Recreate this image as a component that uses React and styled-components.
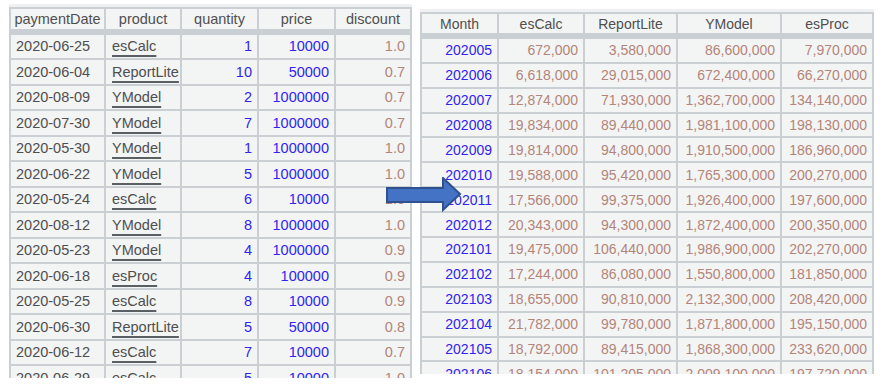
import React from 'react';
import styled, { createGlobalStyle } from 'styled-components';

const GlobalStyle = createGlobalStyle`
	html, body {
		margin: 0;
		padding: 0;
		background: #ffffff;
	}
	body {
		font-family: "Liberation Sans", Arial, sans-serif;
	}
	*, *::before, *::after {
		box-sizing: border-box;
	}
`;

const Page = styled.div`
	position: relative;
	width: 885px;
	height: 388px;
	display: flex;
	align-items: flex-start;
	overflow: hidden;
`;

const Panel = styled.div`
	margin-top: ${p => p.top}px;
	margin-left: ${p => p.left}px;
	height: ${p => p.height}px;
	overflow: hidden;
	border-top: 3px solid #eef0f1;
`;

const Grid = styled.div`
	display: grid;
	grid-template-columns: ${p => p.cols};
	grid-auto-rows: ${p => p.rowHeight}px;
	gap: 2px;
	padding: 2px;
	background: #c9cfd3;
	font-size: ${p => p.fontSize}px;
`;

const HeadCell = styled.div`
	background: #f3f4f4;
	color: #4f4f4f;
	display: flex;
	align-items: center;
	justify-content: center;
	height: ${p => p.height}px;
	white-space: nowrap;
	overflow: hidden;
`;

const Cell = styled.div`
	background: #f3f4f4;
	display: flex;
	align-items: center;
	justify-content: ${p => (p.align === 'left' ? 'flex-start' : 'flex-end')};
	padding: 0 5px;
	white-space: nowrap;
	overflow: hidden;
	color: ${p =>
		p.tone === 'blue' ? '#3124f0' : p.tone === 'brown' ? '#b3857a' : '#4f4f4f'};
`;

const LinkText = styled.span`
	text-decoration: underline;
	text-decoration-color: #5a5f63;
	text-decoration-thickness: 2px;
	text-underline-offset: 4px;
	padding-left: 1px;
`;

const Arrow = styled.svg`
	position: absolute;
	left: 386px;
	top: 177px;
`;

const orders = [
	['2020-06-25', 'esCalc', 1, 10000, '1.0'],
	['2020-06-04', 'ReportLite', 10, 50000, '0.7'],
	['2020-08-09', 'YModel', 2, 1000000, '0.7'],
	['2020-07-30', 'YModel', 7, 1000000, '0.7'],
	['2020-05-30', 'YModel', 1, 1000000, '1.0'],
	['2020-06-22', 'YModel', 5, 1000000, '1.0'],
	['2020-05-24', 'esCalc', 6, 10000, '1.0'],
	['2020-08-12', 'YModel', 8, 1000000, '1.0'],
	['2020-05-23', 'YModel', 4, 1000000, '0.9'],
	['2020-06-18', 'esProc', 4, 100000, '0.9'],
	['2020-05-25', 'esCalc', 8, 10000, '0.9'],
	['2020-06-30', 'ReportLite', 5, 50000, '0.8'],
	['2020-06-12', 'esCalc', 7, 10000, '0.7'],
	['2020-06-29', 'esCalc', 5, 10000, '1.0']
];

const months = [
	['202005', '672,000', '3,580,000', '86,600,000', '7,970,000'],
	['202006', '6,618,000', '29,015,000', '672,400,000', '66,270,000'],
	['202007', '12,874,000', '71,930,000', '1,362,700,000', '134,140,000'],
	['202008', '19,834,000', '89,440,000', '1,981,100,000', '198,130,000'],
	['202009', '19,814,000', '94,800,000', '1,910,500,000', '186,960,000'],
	['202010', '19,588,000', '95,420,000', '1,765,300,000', '200,270,000'],
	['202011', '17,566,000', '99,375,000', '1,926,400,000', '197,600,000'],
	['202012', '20,343,000', '94,300,000', '1,872,400,000', '200,350,000'],
	['202101', '19,475,000', '106,440,000', '1,986,900,000', '202,270,000'],
	['202102', '17,244,000', '86,080,000', '1,550,800,000', '181,850,000'],
	['202103', '18,655,000', '90,810,000', '2,132,300,000', '208,420,000'],
	['202104', '21,782,000', '99,780,000', '1,871,800,000', '195,150,000'],
	['202105', '18,792,000', '89,415,000', '1,868,300,000', '233,620,000'],
	['202106', '18,154,000', '101,205,000', '2,009,100,000', '197,720,000']
];

const OrdersTable = () => (
	<Panel top={4} left={9} height={374}>
		<Grid cols="93px 74px 75px 75px 74px" rowHeight={23.5} fontSize={14.5}>
			{['paymentDate', 'product', 'quantity', 'price', 'discount'].map(h => (
				<HeadCell key={h} height={20}>{h}</HeadCell>
			))}
			{orders.map(row => (
				<React.Fragment key={row[0]}>
					<Cell align="left">{row[0]}</Cell>
					<Cell align="left"><LinkText>{row[1]}</LinkText></Cell>
					<Cell tone="blue">{row[2]}</Cell>
					<Cell tone="blue">{row[3]}</Cell>
					<Cell tone="brown">{row[4]}</Cell>
				</React.Fragment>
			))}
		</Grid>
	</Panel>
);

const SummaryTable = () => (
	<Panel top={9} left={8} height={365}>
		<Grid cols="75px 84px 91px 102px 90px" rowHeight={22.9} fontSize={14}>
			{['Month', 'esCalc', 'ReportLite', 'YModel', 'esProc'].map(h => (
				<HeadCell key={h} height={19}>{h}</HeadCell>
			))}
			{months.map(row => (
				<React.Fragment key={row[0]}>
					<Cell tone="blue">{row[0]}</Cell>
					{row.slice(1).map((v, i) => (
						<Cell key={i} tone="brown">{v}</Cell>
					))}
				</React.Fragment>
			))}
		</Grid>
	</Panel>
);

export default function App() {
	return (
		<Page>
			<GlobalStyle />
			<OrdersTable />
			<SummaryTable />
			<Arrow width="76" height="36" viewBox="0 0 76 36">
				<polygon
					points="1,11 57,11 57,1 74,17 57,33 57,25 1,25"
					fill="#4472c4"
					stroke="#2f528f"
					strokeWidth="2"
					strokeLinejoin="miter"
				/>
			</Arrow>
		</Page>
	);
}
